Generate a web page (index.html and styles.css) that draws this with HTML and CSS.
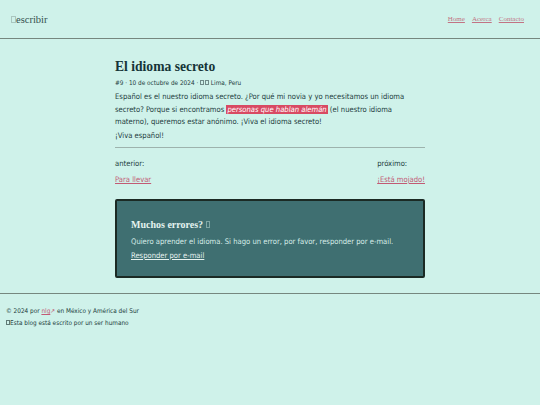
FILE: index.html
```html
<!DOCTYPE html>
<html lang="es">
<head>
<meta charset="utf-8">
<title>El idioma secreto</title>
<link rel="stylesheet" href="styles.css">
</head>
<body>
<header class="site-header">
  <a class="brand" href="#"><span class="tofu"></span>escribir</a>
  <nav class="nav">
    <a href="#">Home</a>
    <a href="#">Acerca</a>
    <a href="#">Contacto</a>
  </nav>
</header>
<main class="main">
  <article class="post">
    <h1 class="post-title">El idioma secreto</h1>
    <p class="meta">#9 · 10 de octubre de 2024 · <span class="tofu sm"></span><span class="tofu sm"></span> Lima, Peru</p>
    <p>Español es el nuestro idioma secreto. ¿Por qué mi novia y yo necesitamos un idioma secreto? Porque si encontramos <em class="hl">personas que hablan alemán</em> (el nuestro idioma materno), queremos estar anónimo. ¡Viva el idioma secreto!</p>
    <p class="last">¡Viva español!</p>
  </article>
  <nav class="pager">
    <div class="pager-col">
      <span class="pager-label">anterior:</span>
      <a href="#">Para llevar</a>
    </div>
    <div class="pager-col right">
      <span class="pager-label">próximo:</span>
      <a href="#">¡Está mojado!</a>
    </div>
  </nav>
  <section class="errors">
    <h2 class="errors-title">Muchos errores? <span class="tofu"></span></h2>
    <p>Quiero aprender el idioma. Si hago un error, por favor, responder por e-mail.</p>
    <a href="#">Responder por e-mail</a>
  </section>
</main>
<footer class="site-footer">
  <p>© 2024 por <a href="#">nlg</a><span class="ext">↗</span> en México y América del Sur</p>
  <p><span class="tofu ft"></span>Esta blog está escrito por un ser humano</p>
</footer>
</body>
</html>
```
FILE: styles.css
```css
html, body { margin: 0; padding: 0; }
body {
  background: #cff2ea;
  color: #1d3d40;
  font-family: "DejaVu Sans Condensed", "DejaVu Sans", sans-serif;
  font-size: 7.6px;
  min-height: 405px;
}
a { color: #c25a74; }
.tofu {
  display: inline-block;
  box-sizing: border-box;
  width: 4px;
  height: 6px;
  border: 1px solid #9ab8b2;
  vertical-align: baseline;
  margin-right: 1px;
}
.site-header {
  height: 38px;
  border-bottom: 1px solid #76877f;
  display: flex;
  align-items: center;
  justify-content: space-between;
  padding: 0 16px 0 11px;
}
.brand {
  font-family: "Liberation Serif", "Times New Roman", serif;
  font-size: 10.5px;
  color: #35504f;
  text-decoration: none;
  padding-top: 1px;
}
.brand .tofu { width: 5px; height: 7px; border-color: #a9c6bf; margin-right: 0; }
.nav { display: flex; gap: 7px; font-family: "Liberation Serif", serif; font-size: 7px; }
.nav a { color: #c27384; }
.main {
  width: 100%;
  padding-top: 19px;
  padding-bottom: 15px;
  border-bottom: 1px solid #76877f;
}
.post, .pager, .errors { width: 310px; margin-left: auto; margin-right: auto; box-sizing: border-box; }
.post { border-bottom: 1px solid #9db3ad; padding-bottom: 5px; }
.post-title {
  font-family: "Liberation Serif", "Times New Roman", serif;
  font-size: 13.6px;
  font-weight: bold;
  margin: 0 0 4px;
  line-height: 17px;
  color: #163538;
}
.post p { line-height: 12.5px; margin: 0; }
.post p.last { margin-top: 1px; }
.post p.meta { font-size: 6.4px; line-height: 8px; margin-bottom: 4px; }
.meta .tofu { width: 4px; height: 5px; border-color: #6f8b88; margin-right: 0.5px; }
.hl {
  background: #d84a63;
  color: #fff;
  padding: 0 1px;
}
.pager {
  display: flex;
  justify-content: space-between;
  padding-top: 11px;
  padding-bottom: 15px;
}
.pager-col { display: flex; flex-direction: column; gap: 7px; line-height: 9px; }
.pager-col.right { align-items: flex-start; }
.errors {
  background: #3f6f71;
  border: 2px solid #1b2a24;
  color: #d6ece8;
  padding: 18px 14px 16px;
  border-radius: 2px;
}
.errors-title {
  font-family: "Liberation Serif", serif;
  font-size: 10px;
  font-weight: bold;
  margin: 0 0 7px;
  color: #e4f3f0;
}
.errors-title .tofu { width: 4px; height: 7px; border-color: #7fa6a4; }
.errors p { margin: 0 0 5px; line-height: 9px; }
.errors a { color: #e6f2ef; }
.site-footer { padding: 14px 6px; font-size: 6.4px; }
.site-footer p { margin: 0 0 5px; line-height: 7px; }
.site-footer .tofu.ft { width: 4px; height: 5px; border-color: #5f7a76; margin-right: 0; }
.ext { color: #c25a74; }
```
